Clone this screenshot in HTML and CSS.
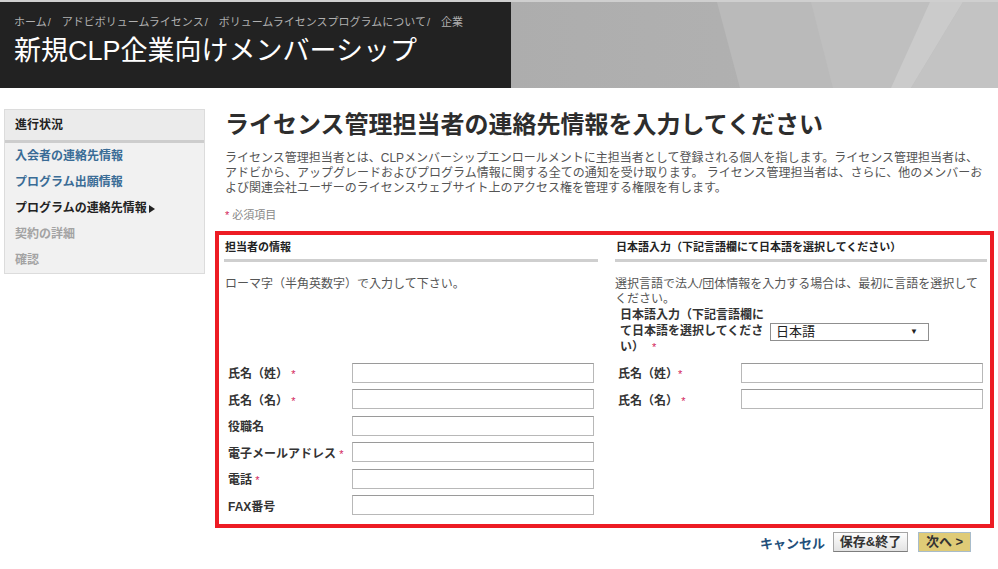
FILE: index.html
```html
<!DOCTYPE html>
<html lang="ja">
<head>
    <meta charset="UTF-8">
    <meta name="viewport" content="width=device-width, initial-scale=1.0">
    <title>新規CLP企業向けメンバーシップ</title>
    <link rel="stylesheet" href="styles.css">
</head>
<body>

    <div class="header">
        <div class="header__title">
            <p class="breadcrumb">
                <span>ホーム</span><i>/</i><span>アドビボリュームライセンス</span><i>/</i><span>ボリュームライセンスプログラムについて</span><i>/</i><span>企業</span>
            </p>
            <h1 class="title">新規CLP企業向けメンバーシップ</h1>
        </div>
        <div class="header__image">
            <svg viewBox="0 0 487 86" preserveAspectRatio="none">
                <defs>
                    <linearGradient id="g1" x1="0" y1="0" x2="1" y2="0">
                        <stop offset="0" stop-color="#adadad"/>
                        <stop offset="1" stop-color="#b4b4b4"/>
                    </linearGradient>
                </defs>
                <rect width="487" height="86" fill="url(#g1)"/>
                <polygon points="206,0 487,0 487,86 229,86" fill="#bababa"/>
                <polygon points="300,0 487,0 487,86 322,86" fill="#bfbfbf"/>
                <polygon points="419,0 452,0 400,86 380,86" fill="#cbcbcb"/>
                <polygon points="452,0 487,0 487,86 400,86" fill="#c3c3c3"/>
            </svg>
        </div>
    </div>

    <div class="wrapper">
        <div class="sidebar">
            <div class="sidebar__head">進行状況</div>
            <ul class="steps">
                <li class="step">入会者の連絡先情報</li>
                <li class="step">プログラム出願情報</li>
                <li class="step step--current">プログラムの連絡先情報<span class="step__arrow"></span></li>
                <li class="step step--disabled">契約の詳細</li>
                <li class="step step--disabled">確認</li>
            </ul>
        </div>

        <div class="main">
            <h2 class="main__title">ライセンス管理担当者の連絡先情報を入力してください</h2>
            <p class="main__desc">ライセンス管理担当者とは、CLPメンバーシップエンロールメントに主担当者として登録される個人を指します。ライセンス管理担当者は、<br>アドビから、アップグレードおよびプログラム情報に関する全ての通知を受け取ります。 ライセンス管理担当者は、さらに、他のメンバーお<br>よび関連会社ユーザーのライセンスウェブサイト上のアクセス権を管理する権限を有します。</p>
            <p class="required"><span class="star">*</span> 必須項目</p>

            <div class="box">
                <div class="box__head">担当者の情報</div>
                <div class="box__head">日本語入力（下記言語欄にて日本語を選択してください）</div>

                <div class="intro">ローマ字（半角英数字）で入力して下さい。</div>
                <div class="intro intro--right">
                    <p class="intro__text">選択言語で法人/団体情報を入力する場合は、最初に言語を選択して<br>ください。</p>
                    <div class="lang">
                        <label class="lang__label">日本語入力（下記言語欄にて日本語を選択してください）<span class="star star--gap">*</span></label>
                        <div class="lang__select">
                            <span>日本語</span>
                            <span class="lang__arrow">▼</span>
                        </div>
                    </div>
                </div>

                <div class="fields">
                    <div class="field"><label class="field__label">氏名（姓） <span class="star">*</span></label><input class="field__input" type="text"></div>
                    <div class="field"><label class="field__label">氏名（名） <span class="star">*</span></label><input class="field__input" type="text"></div>
                    <div class="field"><label class="field__label">役職名</label><input class="field__input" type="text"></div>
                    <div class="field"><label class="field__label">電子メールアドレス <span class="star">*</span></label><input class="field__input" type="text"></div>
                    <div class="field"><label class="field__label">電話 <span class="star">*</span></label><input class="field__input" type="text"></div>
                    <div class="field"><label class="field__label">FAX番号</label><input class="field__input" type="text"></div>
                </div>
                <div class="fields fields--right">
                    <div class="field"><label class="field__label">氏名（姓）<span class="star">*</span></label><input class="field__input" type="text"></div>
                    <div class="field"><label class="field__label">氏名（名） <span class="star">*</span></label><input class="field__input" type="text"></div>
                </div>
            </div>

            <div class="actions">
                <a class="cancel">キャンセル</a>
                <button class="button" type="button">保存&amp;終了</button>
                <button class="button button--next" type="button">次へ &gt;</button>
            </div>
        </div>
    </div>

</body>
</html>
```

FILE: styles.css
```css
* {
    box-sizing: border-box;
}

body {
    margin: 0;
    font-family: "Liberation Sans", "Noto Sans CJK JP", sans-serif;
    color: #333;
    background: #fff;
}

/* header */

.header {
    display: flex;
    height: 88px;
    border-top: 2px solid #cfcfcf;
}

.header__title {
    width: 511px;
    background: #222;
    padding: 12px 0 0 14px;
}

.breadcrumb {
    margin: 0;
    font-size: 11px;
    line-height: 16px;
    color: #b0b0b0;
}

.breadcrumb i {
    font-style: normal;
    margin: 0 11px 0 1px;
}

.title {
    margin: 4px 0 0;
    font-size: 27px;
    line-height: 34px;
    font-weight: normal;
    color: #fff;
}

.header__image {
    flex: 1;
    background: #b3b3b3;
}

.header__image svg {
    display: block;
    width: 100%;
    height: 100%;
}

/* layout */

.wrapper {
    display: flex;
    align-items: flex-start;
    padding: 21px 4px 0 4px;
}

.sidebar {
    width: 201px;
    border: 1px solid #dcdcdc;
    background: #f1f1f1;
}

.sidebar__head {
    height: 33px;
    line-height: 30px;
    padding-left: 10px;
    background: #ebebeb;
    border-bottom: 3px solid #cdcdcd;
    font-size: 12px;
    font-weight: bold;
    color: #222;
}

.steps {
    list-style: none;
    margin: 0;
    padding: 0;
}

.step {
    height: 26px;
    line-height: 26px;
    padding-left: 10px;
    font-size: 12px;
    font-weight: bold;
    color: #3a6c96;
}

.step--current {
    color: #222;
}

.step--disabled {
    color: #a3a3a3;
}

.step__arrow {
    display: inline-block;
    margin-left: 2px;
    border-left: 6px solid #222;
    border-top: 4.5px solid transparent;
    border-bottom: 4.5px solid transparent;
    vertical-align: -1px;
}

.main {
    flex: 1;
    margin-left: 20px;
}

.main__title {
    margin: 0;
    font-size: 24px;
    line-height: 32px;
    font-weight: bold;
    color: #2d2d2d;
}

.main__desc {
    margin: 9.5px 0 0;
    font-size: 12px;
    line-height: 15px;
    color: #555;
}

.required {
    margin: 12px 0 0;
    font-size: 11px;
    line-height: 15px;
    color: #888;
}

.star {
    color: #d3245a;
    font-size: 11px;
    font-weight: normal;
}

.star--gap {
    margin-left: 8px;
}

/* form box */

.box {
    display: grid;
    grid-template-columns: 374px 372px;
    column-gap: 17px;
    margin: 8.5px 0 0 -10px;
    padding: 0 3px 9px 5px;
    border: 4px solid #ed1c24;
}

.box__head {
    padding: 4px 0 4px 1px;
    line-height: 16px;
    font-size: 11px;
    font-weight: bold;
    color: #222;
    border-bottom: 3px solid #cfcfcf;
}

.intro {
    padding: 14.5px 0 0 1px;
    font-size: 12px;
    line-height: 15px;
    color: #555;
}

.intro--right {
    padding: 14.5px 0 8px 0;
}

.intro__text {
    margin: 0;
}

.lang {
    display: flex;
    align-items: center;
    padding-left: 5px;
}

.lang__label {
    width: 150px;
    font-size: 12px;
    line-height: 16px;
    font-weight: bold;
    color: #333;
}

.lang__select {
    display: flex;
    justify-content: space-between;
    align-items: center;
    width: 159px;
    height: 18px;
    margin-top: 2px;
    padding: 0 10px 0 5px;
    border: 1px solid #8f8f8f;
    background: #fff;
    font-size: 13px;
    color: #222;
}

.lang__arrow {
    font-size: 8px;
}

.fields {
    display: flex;
    flex-direction: column;
    gap: 6.6px;
    padding-left: 4px;
}

.fields--right {
    padding-left: 3px;
}

.field {
    display: flex;
    align-items: center;
    height: 20px;
}

.field__label {
    width: 124px;
    font-size: 12px;
    font-weight: bold;
    color: #333;
}

.fields--right .field__label {
    width: 123px;
}

.field__input {
    width: 242px;
    height: 20px;
    margin: 0;
    border: 1px solid #b8b8b8;
    border-top-color: #9a9a9a;
    background: #fff;
}

/* buttons */

.actions {
    display: flex;
    justify-content: flex-end;
    align-items: center;
    margin-top: 4px;
    padding-right: 23px;
}

.cancel {
    margin-right: 8px;
    font-size: 13px;
    font-weight: bold;
    color: #234f7a;
    cursor: pointer;
}

.button {
    width: 75px;
    height: 20px;
    margin-right: 10px;
    padding: 0;
    border: 1px solid #a5a5a5;
    border-bottom-color: #7d7d7d;
    background: linear-gradient(#fdfdfd, #e3e3e3);
    font-family: inherit;
    font-size: 13px;
    font-weight: bold;
    line-height: 18px;
    color: #333;
    cursor: pointer;
}

.button--next {
    width: 53px;
    margin-right: 0;
    border-color: #a8bccb;
    background: #dfcb77;
}
```
